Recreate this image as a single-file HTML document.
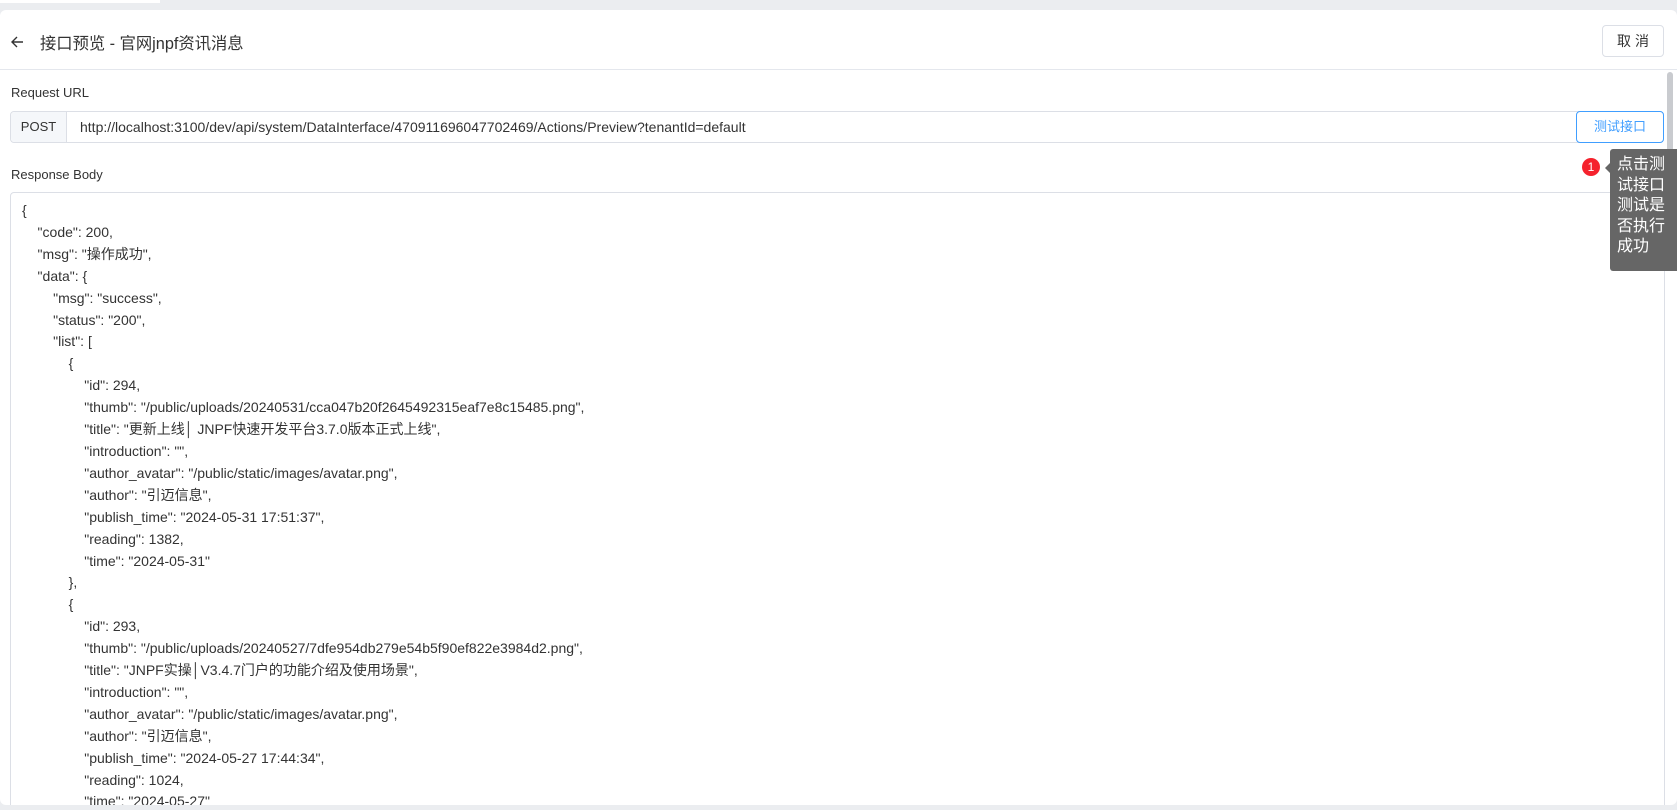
<!DOCTYPE html>
<html><head><meta charset="utf-8"><style>
*{margin:0;padding:0;box-sizing:border-box}
body{width:1677px;height:810px;background:#ebedf0;font-family:"Liberation Sans","Noto Sans CJK SC",sans-serif;color:#333;overflow:hidden;position:relative}
.card{position:absolute;left:0;top:10px;width:1677px;height:795px;background:#fff;border-radius:6px;overflow:hidden}
.hdr{position:absolute;left:0;top:0;width:100%;height:60px;border-bottom:1px solid #e4e7ed}
.title{position:absolute;left:40px;top:20px;font-size:16.3px;color:#333}
.cancel{position:absolute;left:1602px;top:15px;width:62px;height:32px;border:1px solid #dcdfe6;border-radius:4px;font-size:14px;text-align:center;line-height:30px;letter-spacing:4px;padding-left:4px}
.lbl{position:absolute;left:11px;font-size:13px;color:#333}
.inp{position:absolute;left:10px;top:101px;width:1654px;height:32px;border:1px solid #dcdfe6;border-radius:4px}
.post{position:absolute;left:0;top:0;width:56px;height:30px;background:#f5f7fa;border-right:1px solid #dcdfe6;font-size:13px;text-align:center;line-height:30px;border-radius:4px 0 0 4px}
.url{position:absolute;left:69px;top:0;line-height:30px;font-size:14px}
.test{position:absolute;left:1576px;top:101px;width:88px;height:32px;border:1px solid #409eff;border-radius:4px;color:#409eff;font-size:13px;text-align:center;line-height:30px;background:#fff}
.box{position:absolute;left:10px;top:182px;width:1655px;height:640px;border:1px solid #dcdfe6;border-radius:4px}
.code{position:absolute;left:22px;top:190px;font-size:14px;line-height:21.9px;white-space:pre;color:#333}
.sb{position:absolute;left:1667px;top:62px;width:6px;height:190px;background:#c9cbcf;border-radius:3px}
.badge{position:absolute;left:1582px;top:148px;width:18px;height:18px;border-radius:50%;background:#f5222d;color:#fff;font-size:12px;text-align:center;line-height:18px}
.tip{position:absolute;left:1610px;top:139px;width:70px;height:122px;background:#666;border-radius:3px;color:#fff;font-size:16px;line-height:20.5px;padding:6px 0 0 7px}
.tip:before{content:"";position:absolute;left:-5px;top:14px;border:5px solid transparent;border-right-color:#666;border-left:0}
</style></head><body>
<div style="position:absolute;left:0;top:0;width:160px;height:3px;background:#fff"></div>
<div class="card">
<div class="hdr">
<svg style="position:absolute;left:10px;top:25px" width="14" height="14" viewBox="0 0 14 14"><path d="M13 7H2M7 2L2 7l5 5" fill="none" stroke="#333" stroke-width="1.4"/></svg>
<div class="title">接口预览 - 官网jnpf资讯消息</div>
<div class="cancel">取消</div>
</div>
<div class="lbl" style="top:75px">Request URL</div>
<div class="inp"><div class="post">POST</div><div class="url">http://localhost:3100/dev/api/system/DataInterface/470911696047702469/Actions/Preview?tenantId=default</div></div>
<div class="test">测试接口</div>
<div class="lbl" style="top:157px">Response Body</div>
<div class="box"></div>
<div class="code" style="top:190px">{
    "code": 200,
    "msg": "操作成功",
    "data": {
        "msg": "success",
        "status": "200",
        "list": [
            {
                "id": 294,
                "thumb": "/public/uploads/20240531/cca047b20f2645492315eaf7e8c15485.png",
                "title": "更新上线│ JNPF快速开发平台3.7.0版本正式上线",
                "introduction": "",
                "author_avatar": "/public/static/images/avatar.png",
                "author": "引迈信息",
                "publish_time": "2024-05-31 17:51:37",
                "reading": 1382,
                "time": "2024-05-31"
            },
            {
                "id": 293,
                "thumb": "/public/uploads/20240527/7dfe954db279e54b5f90ef822e3984d2.png",
                "title": "JNPF实操│V3.4.7门户的功能介绍及使用场景",
                "introduction": "",
                "author_avatar": "/public/static/images/avatar.png",
                "author": "引迈信息",
                "publish_time": "2024-05-27 17:44:34",
                "reading": 1024,
                "time": "2024-05-27"</div>
<div class="sb"></div>
<div class="badge">1</div>
<div class="tip">点击测<br>试接口<br>测试是<br>否执行<br>成功</div>
</div>
</body></html>
